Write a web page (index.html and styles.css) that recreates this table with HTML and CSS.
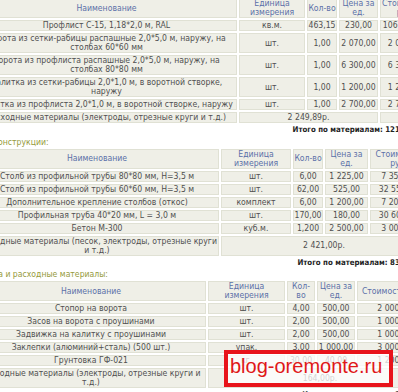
FILE: index.html
```html
<!DOCTYPE html>
<html lang="ru">
<head>
<meta charset="utf-8">
<title>Смета</title>
<link rel="stylesheet" href="styles.css">
</head>
<body>
<div class="page">
  <table class="est est1">
    <colgroup><col class="n"><col class="u"><col class="q"><col class="p"><col class="c"></colgroup>
    <tr><th>Наименование</th><th>Единица измерения</th><th>Кол-во</th><th>Цена за ед.</th><th>Стоимость, руб.</th></tr>
    <tr><td>Профлист С-15, 1,18*2,0 м, RAL</td><td>кв.м.</td><td>463,15</td><td>230,00</td><td>106 524,50</td></tr>
    <tr><td>Ворота из сетки-рабицы распашные 2,0*5,0 м, наружу, на столбах 60*60 мм</td><td>шт.</td><td>1,00</td><td>2 070,00</td><td>2 070,00</td></tr>
    <tr><td>Ворота из профлиста распашные 2,0*5,0 м, наружу, на столбах 80*80 мм</td><td>шт.</td><td>1,00</td><td>6 300,00</td><td>6 300,00</td></tr>
    <tr><td>Калитка из сетки-рабицы 2,0*1,0 м, в воротной створке, наружу</td><td>шт.</td><td>1,00</td><td>1 200,00</td><td>1 200,00</td></tr>
    <tr><td>Калитка из профлиста 2,0*1,0 м, в воротной створке, наружу</td><td>шт.</td><td>1,00</td><td>2 700,00</td><td>2 700,00</td></tr>
    <tr><td>Расходные материалы (электроды, отрезные круги и т.д.)</td><td colspan="3">2 249,89р.</td><td></td></tr>
  </table>
  <div class="total">Итого по материалам: 121 044,39р.</div>

  <div class="section">Металлоконструкции:</div>
  <table class="est est2">
    <colgroup><col class="n"><col class="u"><col class="q"><col class="p"><col class="c"></colgroup>
    <tr><th>Наименование</th><th>Единица измерения</th><th>Кол-во</th><th>Цена за ед.</th><th>Стоимость, руб.</th></tr>
    <tr><td>Столб из профильной трубы 80*80 мм, Н=3,5 м</td><td>шт.</td><td>6,00</td><td>1 225,00</td><td>7 350,00</td></tr>
    <tr><td>Столб из профильной трубы 60*60 мм, Н=3,5 м</td><td>шт.</td><td>62,00</td><td>525,00</td><td>32 550,00</td></tr>
    <tr><td>Дополнительное крепление столбов (откос)</td><td>комплект</td><td>6,00</td><td>1 200,00</td><td>7 200,00</td></tr>
    <tr><td>Профильная труба 40*20 мм, L = 3,0 м</td><td>шт.</td><td>170,00</td><td>180,00</td><td>30 600,00</td></tr>
    <tr><td>Бетон М-300</td><td>куб.м.</td><td>1,200</td><td>2 500,00</td><td>3 000,00</td></tr>
    <tr><td>Расходные материалы (песок, электроды, отрезные круги и т.д.)</td><td colspan="4">2 421,00р.</td></tr>
  </table>
  <div class="total">Итого по материалам: 83 121,00р.</div>

  <div class="section">Фурнитура и расходные материалы:</div>
  <table class="est est3">
    <colgroup><col class="n"><col class="u"><col class="q"><col class="p"><col class="c"></colgroup>
    <tr><th>Наименование</th><th>Единица измерения</th><th>Кол-во</th><th>Цена за ед.</th><th>Стоимость, руб.</th></tr>
    <tr><td>Стопор на ворота</td><td>шт.</td><td>4,00</td><td>500,00</td><td>2 000,00</td></tr>
    <tr><td>Засов на ворота с проушинами</td><td>шт.</td><td>2,00</td><td>500,00</td><td>1 000,00</td></tr>
    <tr><td>Задвижка на калитку с проушинами</td><td>шт.</td><td>2,00</td><td>500,00</td><td>1 000,00</td></tr>
    <tr><td>Заклепки (алюминий+сталь) (500 шт.)</td><td>упак.</td><td>3,00</td><td>1 000,00</td><td>3 000,00</td></tr>
    <tr><td>Грунтовка ГФ-021</td><td>кг.</td><td>30,00</td><td>40,00</td><td>1 200,00</td></tr>
    <tr><td>Расходные материалы (электроды, отрезные круги и т.д.)</td><td colspan="4">164,00р.</td></tr>
  </table>
  <div class="total">Итого по материалам: 8 364,00р.</div>
</div>
<div class="stamp">blog-oremonte.ru</div>
</body>
</html>
```

FILE: styles.css
```css
html, body {
  margin: 0;
  padding: 0;
  background: #ffffff;
}
body {
  width: 398px;
  height: 392px;
  overflow: hidden;
  position: relative;
  font-family: "DejaVu Sans", "Liberation Sans", Arial, sans-serif;
  font-stretch: condensed;
}
.page {
  margin: -4px 0 0 -42px;
  width: 479px;
  font-size: 8.6px;
  line-height: 9px;
  color: #505050;
}
.est {
  border-collapse: separate;
  border-spacing: 2px;
  table-layout: fixed;
}
.est th,
.est td {
  box-sizing: border-box;
  background: #efefe7;
  border: 1px solid #e0e1d4;
  padding: 0;
  text-align: center;
  vertical-align: middle;
  font-weight: normal;
}
.est th {
  color: #5b70a8;
}
.est1 { margin-left: 16px; width: 458px; }
.est1 .n { width: 261px; }
.est1 .u { width: 66px; }
.est1 .q { width: 30px; }
.est1 .p { width: 39px; }
.est1 .c { width: 50px; }

.est2 { margin-left: 15px; width: 456px; }
.est2 .n { width: 244px; }
.est2 .u { width: 70px; }
.est2 .q { width: 30px; }
.est2 .p { width: 43px; }
.est2 .c { width: 57px; }

.est3 { margin-left: 16px; width: 460px; }
.est3 .n { width: 230px; }
.est3 .u { width: 77px; }
.est3 .q { width: 28px; }
.est3 .p { width: 38px; }
.est3 .c { width: 75px; }

.total {
  text-align: right;
  font-weight: bold;
  font-size: 7.8px;
  line-height: 9px;
  color: #222222;
}
.section {
  margin-top: 3.5px;
  color: #959a3a;
}
.stamp {
  position: absolute;
  left: 224px;
  top: 350px;
  width: 169px;
  height: 37px;
  box-sizing: border-box;
  border: 4px solid #e8141b;
  background: rgba(255, 255, 255, 0.75);
  color: #e01818;
  font-family: "Liberation Sans", Arial, sans-serif;
  font-stretch: normal;
  font-size: 20px;
  line-height: 20px;
  padding: 2px 0 0 2px;
  white-space: nowrap;
}
```
